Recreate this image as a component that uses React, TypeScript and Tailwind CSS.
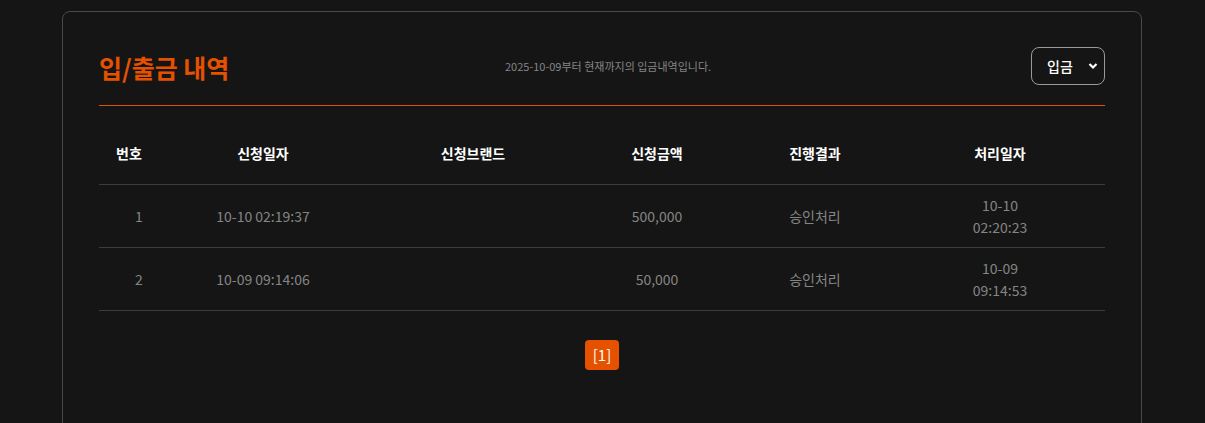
import React from "react";

const rows = [
  { no: 1, date: "10-10 02:19:37", brand: "", amount: "500,000", status: "승인처리", done1: "10-10", done2: "02:20:23" },
  { no: 2, date: "10-09 09:14:06", brand: "", amount: "50,000", status: "승인처리", done1: "10-09", done2: "09:14:53" },
];

const cols = ["w-[60px]", "w-[208px]", "w-[212px]", "w-[156px]", "w-[160px]", "flex-1"];
const heads = ["번호", "신청일자", "신청브랜드", "신청금액", "진행결과", "처리일자"];

export default function App() {
  return (
    <div
      className="min-h-[423px] bg-[#151515] pt-[11px] pl-[62px] pr-[63px]"
      style={{ fontFamily: '"Noto Sans CJK KR", "Noto Sans", sans-serif' }}
    >
      <div className="h-[430px] border border-[#4a4a4a] rounded-[8px] bg-[#151515] px-[36px] pt-[35px]">
        <div className="flex items-center justify-between h-[38px]">
          <div className="text-[#e65100] text-[25px] font-bold w-[300px] leading-none pt-[2px]">입/출금 내역</div>
          <div className="text-[11px] text-[#858585] ml-[106px]">2025-10-09부터 현재까지의 입금내역입니다.</div>
          <div className="flex-1 flex justify-end">
            <div className="w-[74px] h-[38px] border border-[#9a9a9a] rounded-[8px] flex items-center justify-between pl-[15px] pr-[6px] text-white text-[14px] font-medium">
              <span>입금</span>
              <svg width="10" height="8" viewBox="0 0 10 8">
                <path d="M1.5 2 L5 5.5 L8.5 2" fill="none" stroke="white" strokeWidth="2.2" />
              </svg>
            </div>
          </div>
        </div>
        <div className="h-px bg-[#e65100] mt-[20px]" />
        <div className="mt-[17px]">
          <div className="flex h-[62px] items-center border-b border-[#3c3c3c] text-white text-[14px] font-bold">
            {heads.map((h, i) => (
              <div key={h} className={`${cols[i]} text-center`}>{h}</div>
            ))}
          </div>
          {rows.map((r) => (
            <div key={r.no} className="flex h-[63px] items-center border-b border-[#3c3c3c] text-[#858585] text-[14px]">
              <div className={`${cols[0]} text-center pl-[20px]`}>{r.no}</div>
              <div className={`${cols[1]} text-center`}>{r.date}</div>
              <div className={`${cols[2]} text-center`}>{r.brand}</div>
              <div className={`${cols[3]} text-center`}>{r.amount}</div>
              <div className={`${cols[4]} text-center`}>{r.status}</div>
              <div className={`${cols[5]} text-center leading-[22px]`}>
                <div>{r.done1}</div>
                <div>{r.done2}</div>
              </div>
            </div>
          ))}
        </div>
        <div className="flex justify-center mt-[29px]">
          <div className="h-[30px] px-[8px] bg-[#e65100] rounded-[4px] text-white text-[15px] flex items-center">[1]</div>
        </div>
      </div>
    </div>
  );
}
